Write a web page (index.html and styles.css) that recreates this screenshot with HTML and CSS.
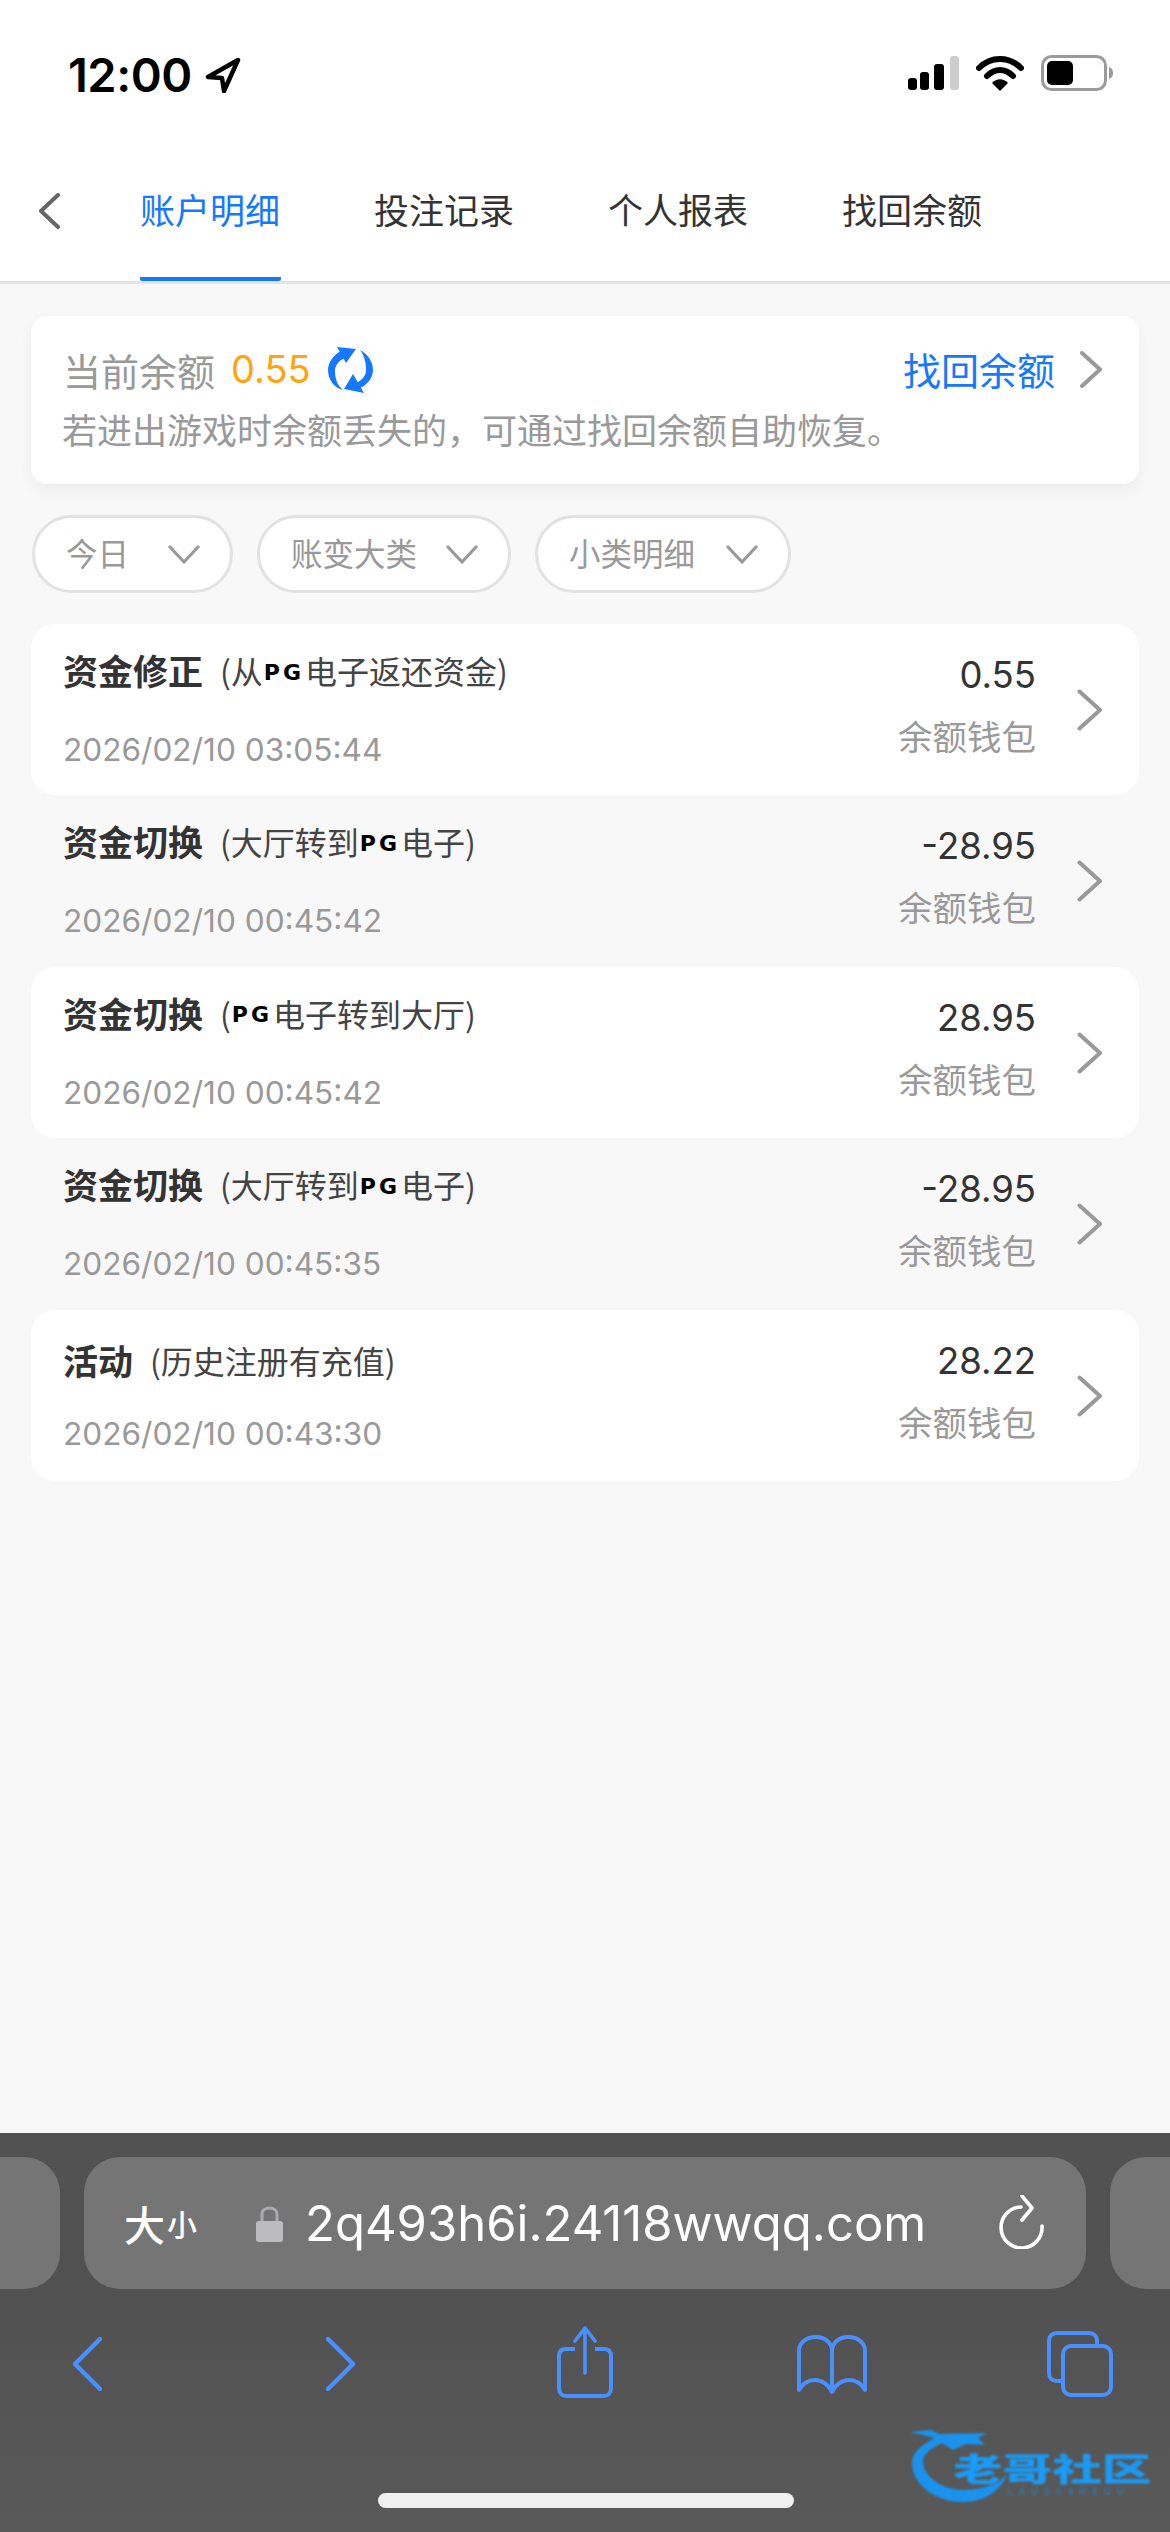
FILE: index.html
```html
<!DOCTYPE html>
<html lang="zh-CN">
<head>
<meta charset="utf-8">
<title>账户明细</title>
<link rel="stylesheet" href="styles.css">
</head>
<body>
<div class="page">
  <header class="header">
    <div class="status">
      <div class="time-wrap">
        <span class="time">12:00</span>
        <svg class="loc" viewBox="0 0 36 36"><path d="M33 3 L3 20 L17 21 L19 34 Z" fill="#fff" stroke="#000" stroke-width="4.5" stroke-linejoin="round"/></svg>
      </div>
      <div class="status-icons">
        <svg class="signal" viewBox="0 0 51 34"><rect x="0" y="22" width="9" height="12" rx="3" fill="#000"/><rect x="12" y="16" width="9" height="18" rx="3" fill="#000"/><rect x="26" y="8" width="10" height="26" rx="3" fill="#000"/><rect x="42" y="0" width="9" height="34" rx="3" fill="#ccc"/></svg>
        <svg class="wifi" viewBox="0 0 48 36"><path d="M3 13 C15 1 33 1 45 13" fill="none" stroke="#000" stroke-width="6" stroke-linecap="round"/><path d="M11 21 C19 13 29 13 37 21" fill="none" stroke="#000" stroke-width="6" stroke-linecap="round"/><path d="M24 36 L16 28 C21 23 27 23 32 28 Z" fill="#000"/></svg>
        <svg class="battery" viewBox="0 0 72 36"><rect x="1.5" y="1.5" width="63" height="33" rx="9" fill="none" stroke="#9a9a9a" stroke-width="3"/><rect x="6" y="6" width="26" height="24" rx="5" fill="#000"/><path d="M68 12 C71 13 72 15 72 18 C72 21 71 23 68 24 Z" fill="#9a9a9a"/></svg>
      </div>
    </div>
    <nav class="nav">
      <svg class="nav-back" viewBox="0 0 24 36"><path d="M21 2 L4 18 L21 34" fill="none" stroke="#666" stroke-width="4" stroke-linecap="round" stroke-linejoin="round"/></svg>
      <a class="tab tab-active">账户明细</a>
      <a class="tab">投注记录</a>
      <a class="tab">个人报表</a>
      <a class="tab">找回余额</a>
    </nav>
  </header>

  <main class="main">
    <section class="balance">
      <div class="balance-top">
        <span class="balance-label">当前余额</span>
        <span class="balance-value">0.55</span>
        <svg class="refresh" viewBox="0 0 45 47"><g fill="#1678ff"><path d="M9 1 L28 3 L18 17 Z"/><path d="M13 5 C5 9 0 17 0 24 C0 33 6 42 15 44 C9 39 7 32 7 25 C7 20 10 15 17 12 Z"/><path d="M36 47 L16 43 L25 28 Z"/><path d="M32 4 C40 8 45 16 45 24 C45 32 39 39 32 42 L27 38 C34 34 38 30 38 24 C38 16 36 9 32 4 Z"/></g></svg>
        <a class="balance-link">找回余额</a>
        <svg class="balance-chevron" viewBox="0 0 24 37"><path d="M3 2 L21 18.5 L3 35" fill="none" stroke="#999" stroke-width="4" stroke-linecap="round" stroke-linejoin="round"/></svg>
      </div>
      <p class="balance-note">若进出游戏时余额丢失的&#xFF0C;可通过找回余额自助恢复。</p>
    </section>

    <div class="filters">
      <div class="pill pill-day"><span>今日</span><svg class="pill-arrow" viewBox="0 0 32 19"><path d="M2 2 L16 17 L30 2" fill="none" stroke="#999" stroke-width="3.2" stroke-linecap="round" stroke-linejoin="round"/></svg></div>
      <div class="pill pill-big"><span>账变大类</span><svg class="pill-arrow" viewBox="0 0 32 19"><path d="M2 2 L16 17 L30 2" fill="none" stroke="#999" stroke-width="3.2" stroke-linecap="round" stroke-linejoin="round"/></svg></div>
      <div class="pill pill-small"><span>小类明细</span><svg class="pill-arrow" viewBox="0 0 32 19"><path d="M2 2 L16 17 L30 2" fill="none" stroke="#999" stroke-width="3.2" stroke-linecap="round" stroke-linejoin="round"/></svg></div>
    </div>

    <ul class="list">
      <li class="row row-white">
        <div class="row-left">
          <div class="row-title"><b>资金修正</b><span class="row-sub">(从<span class="pg">PG</span>电子返还资金)</span></div>
          <div class="row-date">2026/02/10 03:05:44</div>
        </div>
        <div class="row-right"><div class="row-amount">0.55</div><div class="row-wallet">余额钱包</div></div>
        <svg class="row-chevron" viewBox="0 0 26 42"><path d="M2.5 2.5 L23 21 L2.5 39.5" fill="none" stroke="#999" stroke-width="4" stroke-linecap="round" stroke-linejoin="round"/></svg>
      </li>
      <li class="row">
        <div class="row-left">
          <div class="row-title"><b>资金切换</b><span class="row-sub">(大厅转到<span class="pg">PG</span>电子)</span></div>
          <div class="row-date">2026/02/10 00:45:42</div>
        </div>
        <div class="row-right"><div class="row-amount">-28.95</div><div class="row-wallet">余额钱包</div></div>
        <svg class="row-chevron" viewBox="0 0 26 42"><path d="M2.5 2.5 L23 21 L2.5 39.5" fill="none" stroke="#999" stroke-width="4" stroke-linecap="round" stroke-linejoin="round"/></svg>
      </li>
      <li class="row row-white">
        <div class="row-left">
          <div class="row-title"><b>资金切换</b><span class="row-sub">(<span class="pg">PG</span>电子转到大厅)</span></div>
          <div class="row-date">2026/02/10 00:45:42</div>
        </div>
        <div class="row-right"><div class="row-amount">28.95</div><div class="row-wallet">余额钱包</div></div>
        <svg class="row-chevron" viewBox="0 0 26 42"><path d="M2.5 2.5 L23 21 L2.5 39.5" fill="none" stroke="#999" stroke-width="4" stroke-linecap="round" stroke-linejoin="round"/></svg>
      </li>
      <li class="row">
        <div class="row-left">
          <div class="row-title"><b>资金切换</b><span class="row-sub">(大厅转到<span class="pg">PG</span>电子)</span></div>
          <div class="row-date">2026/02/10 00:45:35</div>
        </div>
        <div class="row-right"><div class="row-amount">-28.95</div><div class="row-wallet">余额钱包</div></div>
        <svg class="row-chevron" viewBox="0 0 26 42"><path d="M2.5 2.5 L23 21 L2.5 39.5" fill="none" stroke="#999" stroke-width="4" stroke-linecap="round" stroke-linejoin="round"/></svg>
      </li>
      <li class="row row-white row-plain">
        <div class="row-left">
          <div class="row-title"><b>活动</b><span class="row-sub">(历史注册有充值)</span></div>
          <div class="row-date">2026/02/10 00:43:30</div>
        </div>
        <div class="row-right"><div class="row-amount">28.22</div><div class="row-wallet">余额钱包</div></div>
        <svg class="row-chevron" viewBox="0 0 26 42"><path d="M2.5 2.5 L23 21 L2.5 39.5" fill="none" stroke="#999" stroke-width="4" stroke-linecap="round" stroke-linejoin="round"/></svg>
      </li>
    </ul>
  </main>

  <footer class="browser">
    <div class="url-row">
      <div class="url-side url-side-left"></div>
      <div class="url-pill">
        <span class="aa"><span class="aa-big">大</span><span class="aa-small">小</span></span>
        <svg class="lock" viewBox="0 0 27 38"><path d="M6 18 V10 C6 2 21 2 21 10 V18" fill="none" stroke="#a9a9ae" stroke-width="3"/><rect x="0" y="17" width="27" height="21" rx="3" fill="#bcbcc0"/></svg>
        <span class="url-text">2q493h6i.24118wwqq.com</span>
        <svg class="reload" viewBox="0 0 46 54"><path d="M43 31 A20.5 20.5 0 1 1 22 12" fill="none" stroke="#fff" stroke-width="3.6" stroke-linecap="round"/><path d="M23 1 L33 13 L23 25" fill="none" stroke="#fff" stroke-width="3.6" stroke-linecap="round" stroke-linejoin="round"/></svg>
      </div>
      <div class="url-side url-side-right"></div>
    </div>
    <div class="toolbar">
      <svg class="tool-back" viewBox="0 0 30 54"><path d="M28 2 L3 27 L28 52" fill="none" stroke="#4a8fff" stroke-width="4.5" stroke-linecap="round" stroke-linejoin="round"/></svg>
      <svg class="tool-forward" viewBox="0 0 30 54"><path d="M2 2 L27 27 L2 52" fill="none" stroke="#4a8fff" stroke-width="4.5" stroke-linecap="round" stroke-linejoin="round"/></svg>
      <svg class="tool-share" viewBox="0 0 56 72"><path d="M18 23 H9 C5 23 2 25 2 30 V62 C2 67 5 70 9 70 H47 C51 70 54 67 54 62 V30 C54 25 51 23 47 23 H38" fill="none" stroke="#4a8fff" stroke-width="4"/><path d="M28 47 V3 M18 15 L28 2 L38 15" fill="none" stroke="#4a8fff" stroke-width="3.6" stroke-linecap="round" stroke-linejoin="round"/></svg>
      <svg class="tool-book" viewBox="0 0 70 60"><path d="M35 57 V16 C35 8 28 2 19 2 C9 2 2 8 2 16 V55 C6 48 12 45 18 45 C25 45 32 50 35 57 C38 50 45 45 52 45 C58 45 64 48 68 55 V16 C68 8 61 2 51 2 C42 2 35 8 35 16" fill="none" stroke="#4a8fff" stroke-width="4" stroke-linejoin="round"/></svg>
      <svg class="tool-tabs" viewBox="0 0 66 66"><path d="M16 50 H10 C5 50 2 47 2 42 V10 C2 5 5 2 10 2 H42 C47 2 50 5 50 10 V15" fill="none" stroke="#4a8fff" stroke-width="4"/><rect x="16" y="15" width="48" height="49" rx="8" fill="none" stroke="#4a8fff" stroke-width="4"/></svg>
    </div>
    <div class="home-bar"></div>
    <div class="watermark">
      <svg class="wm-dragon" viewBox="0 0 110 90"><path d="M2 14 L22 12 L32 16 L79 15 L70 20 L77 27 L58 26 L45 32 L34 25 C22 31 15 36 15 44 C15 58 34 72 55 72 C68 72 80 69 89 65 L99 57 C92 73 76 84 55 84 C27 84 4 66 4 45 C4 35 14 26 27 20 Z" fill="#1a93ef"/></svg>
      <div class="wm-title">老哥社区</div>
      <div class="wm-sub">LAUGESHEQU</div>
    </div>
  </footer>
</div>
</body>
</html>
```

FILE: styles.css
```css
* { box-sizing: border-box; }
html, body { margin: 0; padding: 0; }
body {
  width: 1170px;
  height: 2532px;
  overflow: hidden;
  font-family: Inter, "Noto Sans CJK SC", sans-serif;
  background: #f8f8f8;
  color: #333;
}
.page { width: 1170px; height: 2532px; display: flex; flex-direction: column; }

/* Header */
.header { background: #fff; border-bottom: 3px solid #e4e4e4; flex: none; }
.status {
  height: 100px;
  padding: 48px 57px 0 68px;
  display: flex;
  justify-content: space-between;
  align-items: flex-start;
}
.time-wrap { display: flex; align-items: center; gap: 13px; }
.time { font-size: 47px; font-weight: 600; line-height: 54px; color: #000; letter-spacing: -0.5px; }
.loc { width: 36px; height: 36px; }
.status-icons { display: flex; align-items: center; gap: 17px; padding-top: 7px; }
.signal { width: 51px; height: 34px; }
.wifi { width: 48px; height: 36px; }
.battery { width: 72px; height: 36px; }

.nav { height: 181px; display: flex; align-items: stretch; padding-left: 37px; }
.nav-back { width: 24px; height: 36px; margin-top: 93px; margin-right: 79px; flex: none; }
.tab {
  width: 141px;
  margin-right: 93px;
  padding-top: 85px;
  border-bottom: 4px solid transparent;
  border-radius: 0 0 2px 2px;
  font-family: "Noto Sans CJK SC", sans-serif;
  font-size: 35px;
  line-height: 48px;
  white-space: nowrap;
  color: #333;
}
.tab-active { color: #1678ff; border-bottom-color: #1678ff; }

/* Main */
.main { flex: 1; padding: 32px 31px 0; display: flex; flex-direction: column; min-height: 0; }
.balance {
  height: 168px;
  background: #fff;
  border-radius: 16px;
  box-shadow: 0 6px 14px rgba(0, 0, 0, 0.05);
  padding: 26px 36px 0 32px;
}
.balance-top { display: flex; align-items: center; height: 54px; }
.balance-label { font-family: "Noto Sans CJK SC", sans-serif; font-size: 38px; color: #999; }
.balance-value { font-size: 38px; color: #ffa40c; margin-left: 16px; }
.refresh { width: 45px; height: 47px; margin-left: 17px; flex: none; }
.balance-link { font-family: "Noto Sans CJK SC", sans-serif; font-size: 38px; color: #1678ff; margin-left: auto; padding-bottom: 2px; }
.balance-chevron { width: 24px; height: 37px; margin-left: 24px; flex: none; }
.balance-note {
  margin: 9px 0 0 -1px;
  font-family: "Noto Sans CJK SC", sans-serif;
  font-size: 35px;
  line-height: 48px;
  color: #999;
  white-space: nowrap;
}

.filters { display: flex; gap: 24px; margin-top: 31px; padding-left: 1px; }
.pill {
  height: 78px;
  border: 3px solid #e2e2e2;
  border-radius: 39px;
  background: #fff;
  display: flex;
  align-items: center;
  justify-content: space-between;
  font-family: "Noto Sans CJK SC", sans-serif;
  font-size: 31.5px;
  color: #999;
  padding: 0 30px 0 31px;
}
.pill span { padding-bottom: 5px; }
.pill-day { width: 201px; }
.pill-big { width: 254px; }
.pill-small { width: 256px; }
.pill-arrow { width: 32px; height: 19px; flex: none; }

.list { list-style: none; margin: 31px 0 0; padding: 0; }
.row {
  height: 171.4px;
  display: flex;
  border-radius: 24px;
}
.row-white { background: #fff; }
.row-left { flex: 1; padding: 22px 0 0 32px; }
.row-plain .row-left { padding-top: 26px; }
.row-title { height: 48px; line-height: 48px; display: flex; align-items: center; white-space: nowrap; font-family: "Noto Sans CJK SC", sans-serif; }
.row-title b { font-size: 35px; font-weight: 700; color: #333; }
.row-sub { font-size: 32px; color: #444; margin-left: 17px; display: flex; align-items: center; }
.pg {
  font-family: "DejaVu Sans", sans-serif;
  font-size: 22px;
  font-weight: 700;
  color: #000;
  letter-spacing: 3px;
  margin: 0 1px;
  padding-top: 5px;
}
.row-date { margin-top: 32px; font-size: 31.6px; line-height: 48px; color: #999; white-space: nowrap; }
.row-plain .row-date { margin-top: 26px; }
.row-right { text-align: right; padding-top: 27px; }
.row-amount { font-size: 36.5px; line-height: 48px; color: #333; }
.row-wallet { margin-top: 12px; font-family: "Noto Sans CJK SC", sans-serif; font-size: 34.5px; line-height: 48px; color: #999; }
.row-chevron { width: 26px; height: 42px; margin: 65px 36px 0 41px; flex: none; }

/* Browser chrome */
.browser {
  flex: none;
  height: 399px;
  background: linear-gradient(#525252, #515151 40%, #595959);
  position: relative;
  padding-top: 24px;
}
.url-row { display: flex; gap: 24px; height: 132px; }
.url-side { background: #757575; flex: 1; }
.url-side-left { border-radius: 0 36px 36px 0; }
.url-side-right { border-radius: 36px 0 0 36px; }
.url-pill {
  width: 1002px;
  flex: none;
  background: #757575;
  border-radius: 36px;
  display: flex;
  align-items: center;
  color: #fff;
  padding: 0 41px 0 40px;
}
.aa { font-family: "Noto Sans CJK SC", sans-serif; display: flex; align-items: flex-end; width: 132px; font-weight: 500; line-height: 44px; }
.aa-big { font-size: 41px; }
.aa-small { font-size: 30px; margin-left: 2px; }
.lock { width: 27px; height: 38px; flex: none; margin-top: -1px; }
.url-text { font-size: 49px; margin-left: 22px; white-space: nowrap; font-weight: 400; }
.reload { width: 46px; height: 54px; flex: none; margin-left: auto; margin-top: -2px; }

.toolbar { display: flex; align-items: flex-start; height: 120px; padding-left: 72px; }
.tool-back { width: 30px; height: 54px; margin-top: 48px; flex: none; }
.tool-forward { width: 30px; height: 54px; margin: 48px 0 0 224px; flex: none; }
.tool-share { width: 56px; height: 72px; margin: 37px 0 0 201px; flex: none; }
.tool-book { width: 70px; height: 60px; margin: 46px 0 0 184px; flex: none; }
.tool-tabs { width: 66px; height: 66px; margin: 42px 0 0 180px; flex: none; }

.home-bar {
  margin: 84px 0 0 378px;
  width: 416px;
  height: 15px;
  border-radius: 8px;
  background: #f0f0f0;
}
.watermark {
  position: absolute;
  left: 908px;
  top: 285px;
  width: 245px;
  height: 90px;
  filter: blur(0.9px);
}
.wm-dragon { position: absolute; left: 0; top: 0; width: 110px; height: 90px; }
.wm-title {
  position: absolute;
  left: 45px;
  top: 33px;
  font-family: "Noto Sans CJK SC", sans-serif;
  font-size: 32px;
  font-weight: 900;
  line-height: 32px;
  white-space: nowrap;
  color: #1a9bf5;
  transform: scaleX(1.55);
  transform-origin: left center;
}
.wm-sub {
  position: absolute;
  left: 100px;
  top: 69px;
  font-family: Inter, sans-serif;
  font-size: 9px;
  line-height: 10px;
  letter-spacing: 6px;
  white-space: nowrap;
  color: #1f87cc;
}
```
